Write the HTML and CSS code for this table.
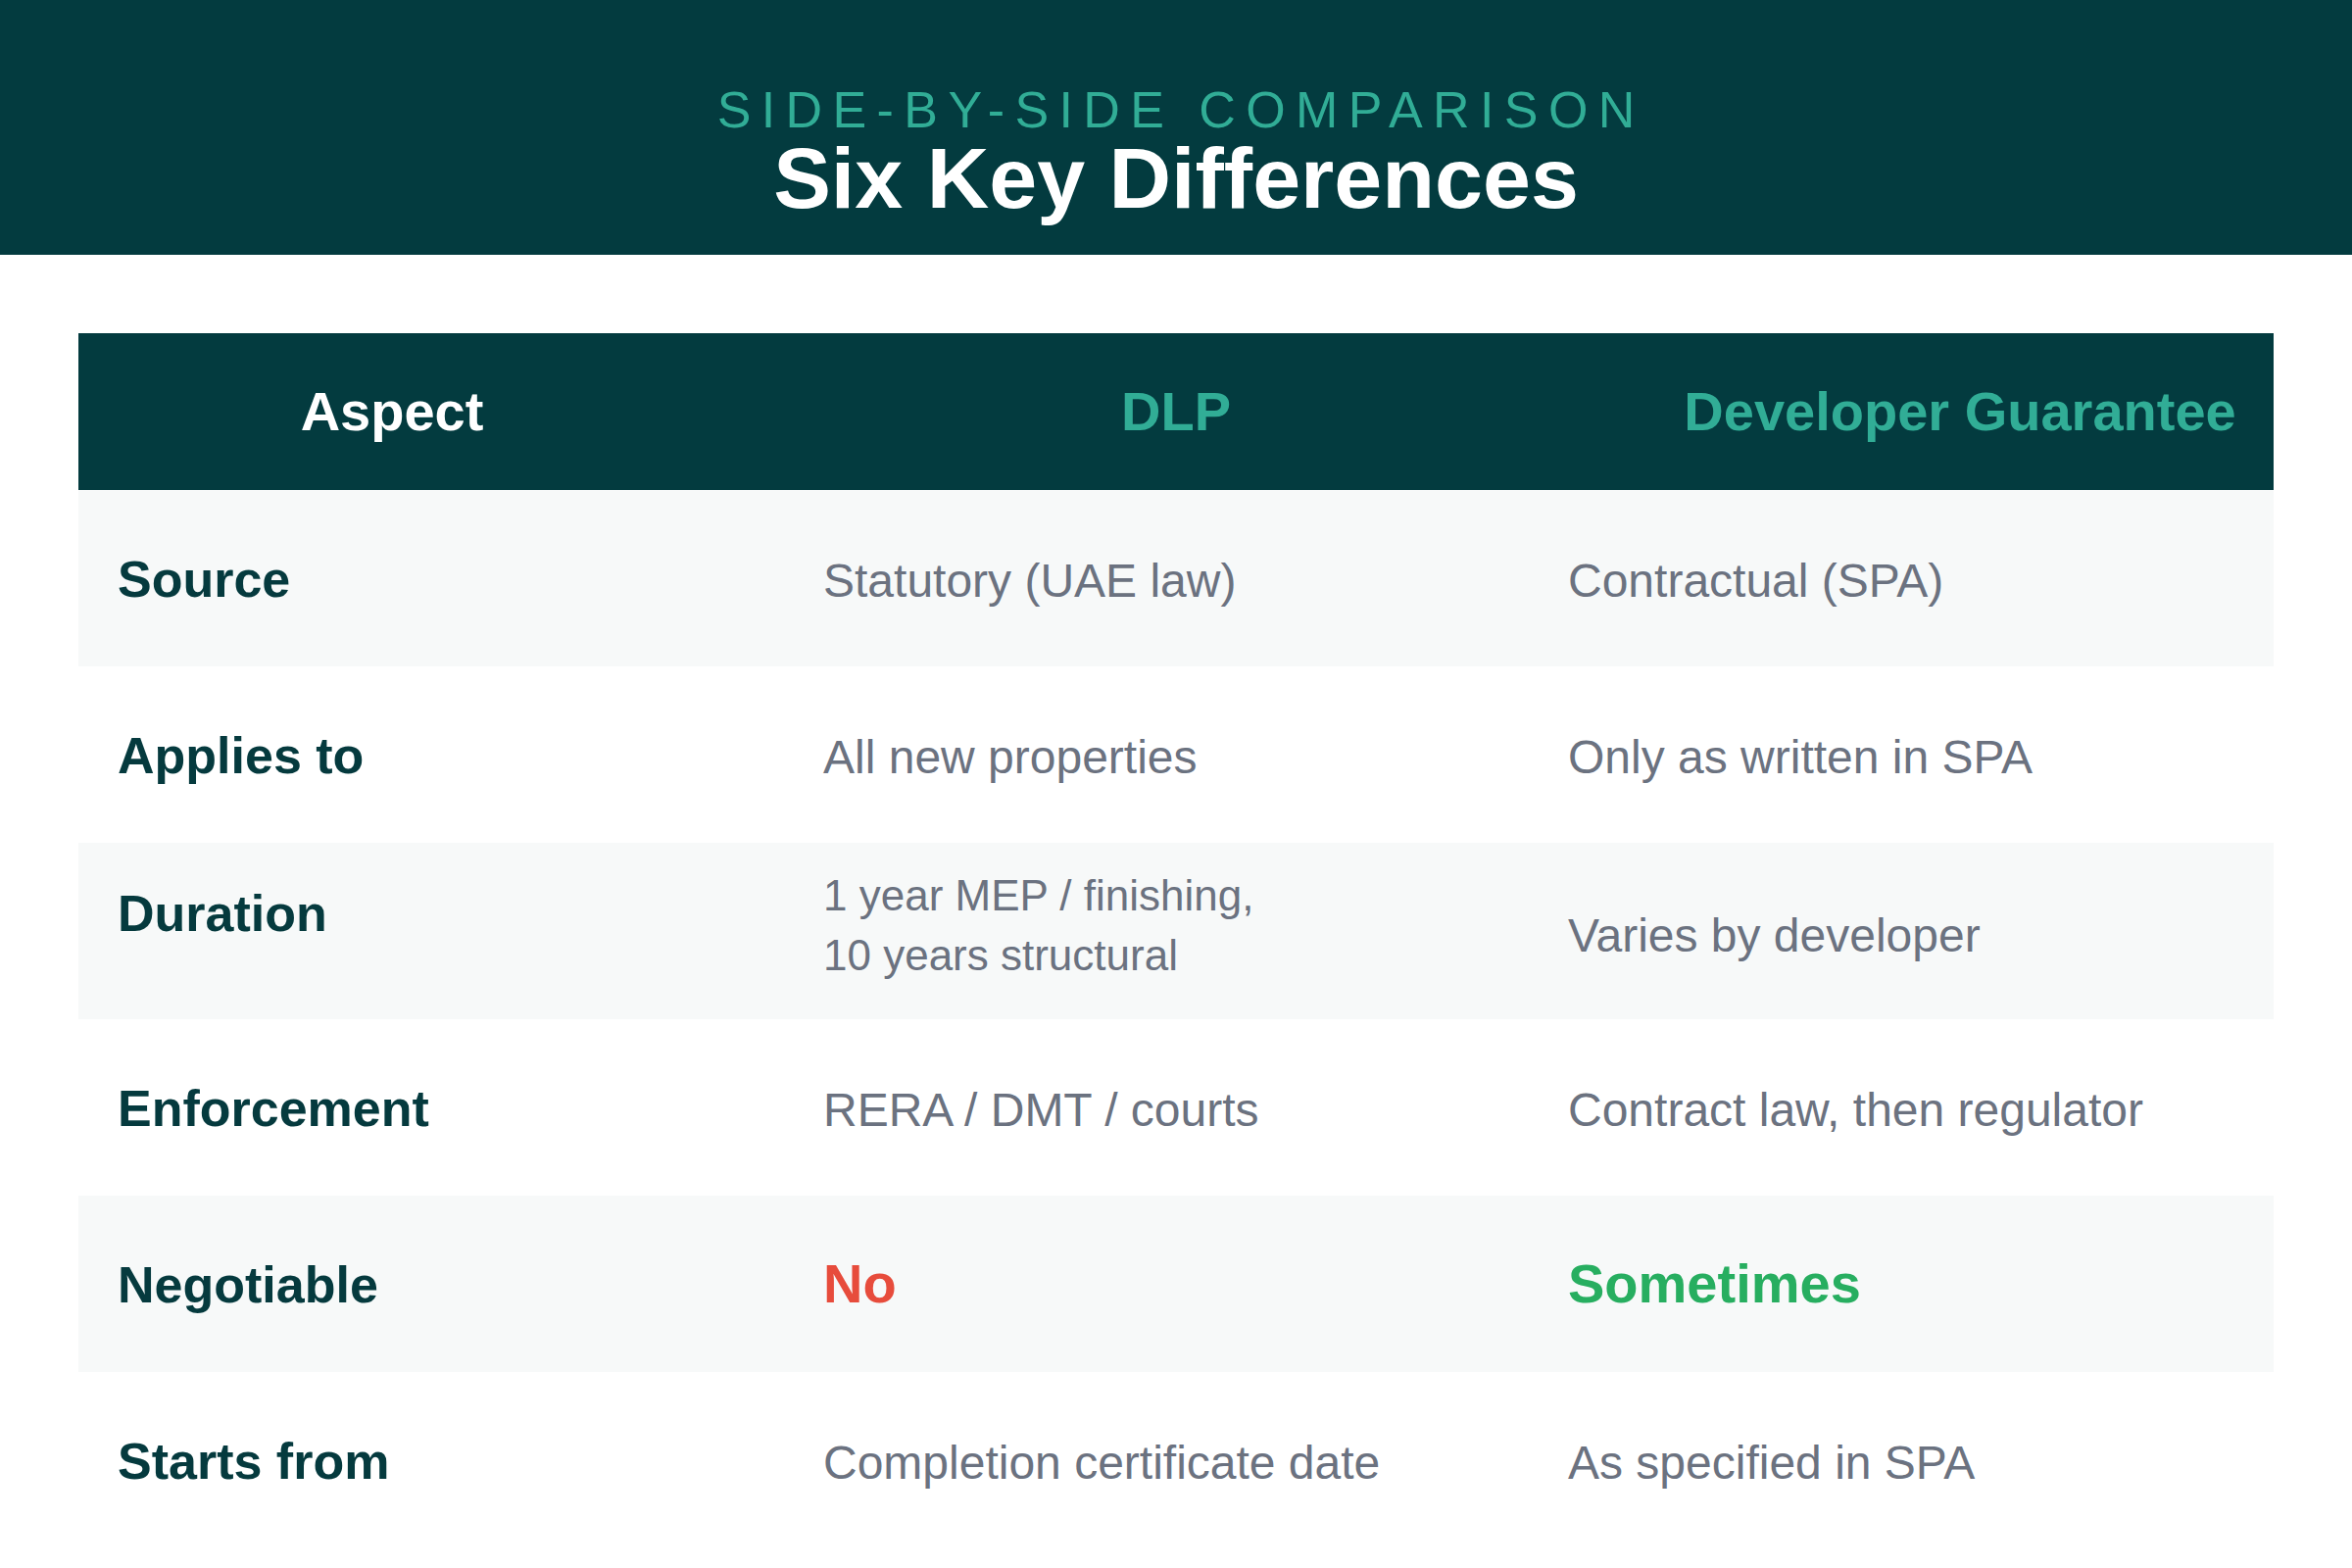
FILE: index.html
```html
<!DOCTYPE html>
<html lang="en">
<head>
<meta charset="utf-8">
<title>Six Key Differences</title>
<link rel="stylesheet" href="styles.css">
</head>
<body>
<header class="hero">
  <div class="eyebrow">SIDE-BY-SIDE COMPARISON</div>
  <h1 class="title">Six Key Differences</h1>
</header>
<main class="content">
  <div class="table">
    <div class="thead">
      <div class="th th-aspect">Aspect</div>
      <div class="th th-accent">DLP</div>
      <div class="th th-accent">Developer Guarantee</div>
    </div>
    <div class="row row-alt">
      <div class="cell label">Source</div>
      <div class="cell value">Statutory (UAE law)</div>
      <div class="cell value">Contractual (SPA)</div>
    </div>
    <div class="row">
      <div class="cell label">Applies to</div>
      <div class="cell value">All new properties</div>
      <div class="cell value">Only as written in SPA</div>
    </div>
    <div class="row row-alt">
      <div class="cell label label-raised">Duration</div>
      <div class="cell value value-multi">1 year MEP / finishing,<br>10 years structural</div>
      <div class="cell value value-low">Varies by developer</div>
    </div>
    <div class="row">
      <div class="cell label">Enforcement</div>
      <div class="cell value">RERA / DMT / courts</div>
      <div class="cell value">Contract law, then regulator</div>
    </div>
    <div class="row row-alt">
      <div class="cell label">Negotiable</div>
      <div class="cell value strong no">No</div>
      <div class="cell value strong yes">Sometimes</div>
    </div>
    <div class="row">
      <div class="cell label">Starts from</div>
      <div class="cell value">Completion certificate date</div>
      <div class="cell value">As specified in SPA</div>
    </div>
  </div>
</main>
</body>
</html>
```

FILE: styles.css
```css
* {
  box-sizing: border-box;
}

html, body {
  margin: 0;
  padding: 0;
  background: #ffffff;
}

body {
  font-family: "Liberation Sans", Arial, sans-serif;
  width: 2400px;
  height: 1600px;
  overflow: hidden;
}

.hero {
  background: #033b3f;
  padding: 90px 0 34px;
  text-align: center;
}

.eyebrow {
  font-size: 52px;
  line-height: 44px;
  letter-spacing: 10.4px;
  color: #31ad96;
  font-weight: 400;
  padding-left: 10.4px;
}

.title {
  margin: 4px 0 0;
  font-size: 88px;
  line-height: 88px;
  font-weight: 700;
  color: #ffffff;
}

.content {
  padding: 80px 80px 20px;
}

.table {
  display: flex;
  flex-direction: column;
}

.thead {
  display: grid;
  grid-template-columns: 2fr 3fr 2fr;
  align-items: center;
  height: 160px;
  background: #033b3f;
}

.th {
  text-align: center;
  font-size: 56px;
  font-weight: 700;
  line-height: 1.2;
  color: #ffffff;
}

.th-accent {
  color: #31ad96;
}

.row {
  display: grid;
  grid-template-columns: 18fr 19fr 19fr;
  align-items: center;
  height: 180px;
  background: #ffffff;
}

.row-alt {
  background: #f7f9f9;
}

.cell {
  padding: 0 40px;
}

.label {
  font-size: 52px;
  font-weight: 700;
  line-height: 1.2;
  color: #053a3e;
  padding-top: 3px;
}

.label-raised {
  padding-top: 0;
  margin-bottom: 36px;
}

.value {
  font-size: 48px;
  line-height: 1.2;
  color: #6b7280;
  padding-top: 6px;
}

.value-low {
  padding-top: 10px;
}

.value-multi {
  font-size: 44px;
  line-height: 61px;
  padding-top: 0;
  margin-bottom: 12px;
}

.strong {
  font-size: 56px;
  font-weight: 700;
  padding-top: 0;
}

.no {
  color: #e74c3c;
}

.yes {
  color: #27ae60;
}
```
